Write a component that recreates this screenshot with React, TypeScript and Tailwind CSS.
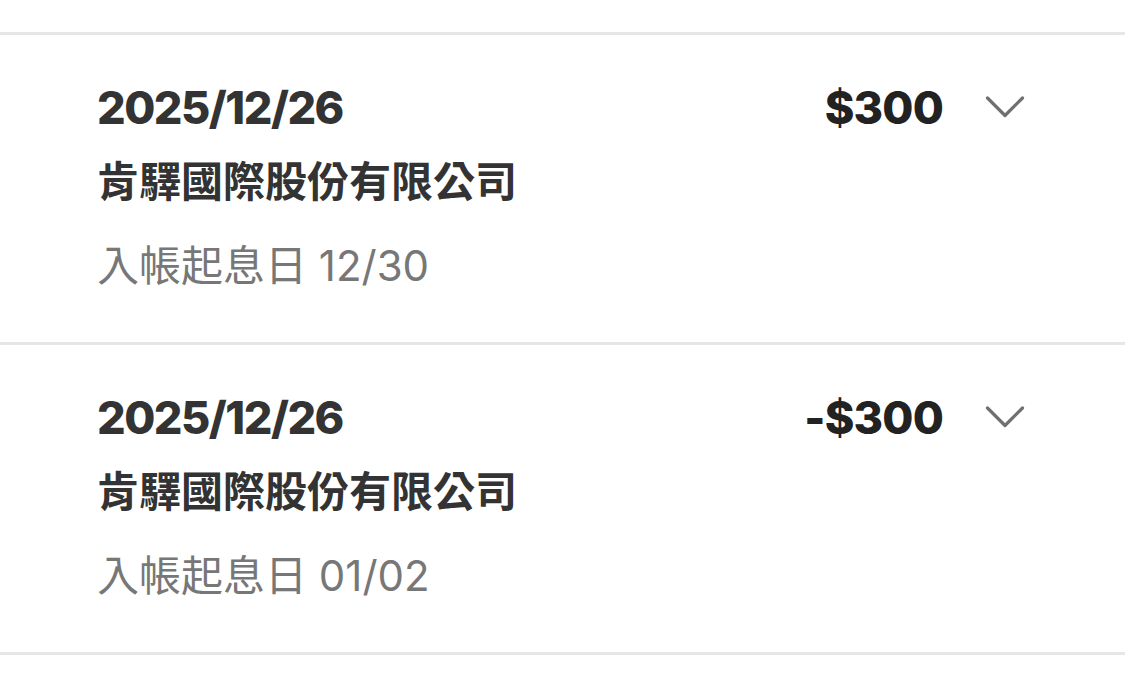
const rows = [
  { date: "2025/12/26", amount: "$300", name: "肯驛國際股份有限公司", sub: "入帳起息日 12/30" },
  { date: "2025/12/26", amount: "-$300", name: "肯驛國際股份有限公司", sub: "入帳起息日 01/02" },
];

function Chevron() {
  return (
    <svg width="40" height="26" viewBox="0 0 40 26" fill="none" className="shrink-0">
      <path d="M2.5 3 L20 20.5 L37.5 3" stroke="#707070" strokeWidth="3.2" strokeLinecap="round" strokeLinejoin="round" />
    </svg>
  );
}

export default function App() {
  return (
    <div
      className="w-[1125px] h-[684px] bg-white overflow-hidden pt-[32px]"
      style={{ fontFamily: 'Inter, "Noto Sans CJK TC", sans-serif' }}
    >
      {rows.map((r, i) => (
        <div key={i} className="border-t-[3px] border-[#e6e6e6] pl-[97px] pr-[100px] pt-[46px] pb-[55px]">
          <div className="flex items-center justify-between h-[54px]">
            <span className="text-[45px] leading-[54px] font-extrabold text-[#333333] tracking-[-1.5px]">{r.date}</span>
            <div className="flex items-center gap-[42px]">
              <span className="text-[45px] leading-[54px] font-extrabold text-[#222222] tracking-[-0.8px]">{r.amount}</span>
              <Chevron />
            </div>
          </div>
          <div className="mt-[26px] text-[42px] leading-[42px] font-bold text-[#333333]">{r.name}</div>
          <div className="mt-[42px] text-[42px] leading-[42px] text-[#777777]">{r.sub}</div>
        </div>
      ))}
      <div className="border-t-[3px] border-[#e6e6e6]" />
    </div>
  );
}
